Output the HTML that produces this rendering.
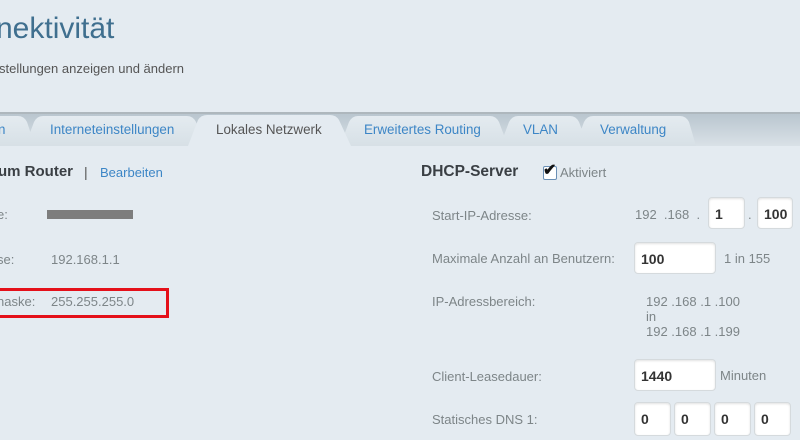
<!DOCTYPE html>
<html><head><meta charset="utf-8"><style>
body{margin:0;width:800px;height:440px;overflow:hidden;background:#e4ebf1;font-family:"Liberation Sans",sans-serif;position:relative}
.a{position:absolute;white-space:nowrap}
.lbl{color:#7d8588;font-size:13px}
.val{color:#7d8588;font-size:13px}
.inp{position:absolute;background:#fff;border:1px solid #d5dadd;border-radius:4px;box-shadow:inset 0 1px 2px rgba(0,0,0,.12);font-weight:bold;font-size:14px;color:#333;box-sizing:border-box;padding:8px 0 0 6px;height:32px}
</style></head><body>
<div class="a" style="left:-4px;top:12px;font-size:30px;color:#3f6f8f">nektivität</div>
<div class="a" style="left:-1px;top:61px;font-size:13px;color:#555">stellungen anzeigen und ändern</div>
<svg class="a" style="left:0;top:112px" width="800" height="34">
<defs><linearGradient id="g" x1="0" y1="0" x2="0" y2="1"><stop offset="0" stop-color="#b9c6cf"/><stop offset="1" stop-color="#d9e1e7"/></linearGradient>
<linearGradient id="t" x1="0" y1="0" x2="0" y2="1"><stop offset="0" stop-color="#e4ebf0"/><stop offset="1" stop-color="#d7e0e6"/></linearGradient></defs>
<rect x="0" y="0" width="800" height="2" fill="#aeb7bd"/>
<rect x="0" y="2" width="800" height="32" fill="url(#g)"/>
<path d="M-10 34 L-10 4 L18 4 Q24 4 27 10 L35 34Z" fill="url(#t)"/>
<path d="M25 34 L34 10 Q37 4 43 4 L187 4 Q193 4 196 10 L205 34Z" fill="url(#t)"/>
<path d="M340 34 L349 10 Q352 4 358 4 L490 4 Q496 4 499 10 L508 34Z" fill="url(#t)"/>
<path d="M500 34 L509 10 Q512 4 518 4 L570 4 Q576 4 579 10 L588 34Z" fill="url(#t)"/>
<path d="M575 34 L584 10 Q587 4 593 4 L680 4 Q686 4 689 10 L696 34Z" fill="url(#t)"/>
<path d="M188 34 L198 8 Q201 3 207 3 L330 3 Q336 3 339 8 L351 34Z" fill="#e4ebf1"/>
</svg>
<div class="a" style="left:-2px;top:122px;font-size:13.4px;color:#3d86c6">n</div>
<div class="a" style="left:50px;top:122px;font-size:13.4px;color:#3d86c6">Interneteinstellungen</div>
<div class="a" style="left:216px;top:122px;font-size:13.4px;color:#555">Lokales Netzwerk</div>
<div class="a" style="left:364px;top:122px;font-size:13.4px;color:#3d86c6">Erweitertes Routing</div>
<div class="a" style="left:523px;top:122px;font-size:13.4px;color:#3d86c6">VLAN</div>
<div class="a" style="left:600px;top:122px;font-size:13.4px;color:#3d86c6">Verwaltung</div>

<div class="a" style="left:-2px;top:163px;font-size:15px;font-weight:bold;color:#3a3f44">um Router</div>
<div class="a" style="left:84px;top:164px;font-size:14px;color:#555">|</div>
<div class="a" style="left:100px;top:165px;font-size:13px;color:#3d86c6">Bearbeiten</div>
<div class="a lbl" style="left:-3px;top:207px">e:</div>
<div class="a" style="left:47px;top:210px;width:86px;height:9px;background:#7d7d7d"></div>
<div class="a lbl" style="left:-3px;top:252px">se:</div>
<div class="a val" style="left:51px;top:252px">192.168.1.1</div>
<div class="a" style="left:-10px;top:288px;width:173px;height:24px;border:3px solid #e4101a"></div>
<div class="a lbl" style="left:-3px;top:294px">naske:</div>
<div class="a val" style="left:51px;top:294px">255.255.255.0</div>

<div class="a" style="left:421px;top:163px;font-size:15.5px;font-weight:bold;color:#3a3f44">DHCP-Server</div>
<div class="a" style="left:543px;top:166px;width:12px;height:12px;border:1px solid #6a8fb5;background:#fff;border-radius:2px"></div>
<div class="a" style="left:543px;top:160px;font-size:16px;font-weight:bold;color:#111">✔</div>
<div class="a lbl" style="left:560px;top:165px">Aktiviert</div>
<div class="a lbl" style="left:432px;top:208px">Start-IP-Adresse:</div>
<div class="a val" style="left:635px;top:207px">192 &nbsp;.168 &nbsp;.</div>
<div class="inp" style="left:708px;top:197px;width:37px">1</div>
<div class="a val" style="left:748px;top:207px">.</div>
<div class="inp" style="left:757px;top:197px;width:36px">100</div>
<div class="a lbl" style="left:432px;top:251px">Maximale Anzahl an Benutzern:</div>
<div class="inp" style="left:634px;top:242px;width:82px">100</div>
<div class="a val" style="left:724px;top:251px">1 in 155</div>
<div class="a lbl" style="left:432px;top:294px">IP-Adressbereich:</div>
<div class="a val" style="left:646px;top:294px;line-height:15px">192 .168 .1 .100<br>in<br>192 .168 .1 .199</div>
<div class="a lbl" style="left:432px;top:369px">Client-Leasedauer:</div>
<div class="inp" style="left:634px;top:359px;width:82px">1440</div>
<div class="a val" style="left:720px;top:368px">Minuten</div>
<div class="a lbl" style="left:432px;top:412px">Statisches DNS 1:</div>
<div class="inp" style="left:634px;top:402px;width:37px;height:34px">0</div>
<div class="inp" style="left:674px;top:402px;width:37px;height:34px">0</div>
<div class="inp" style="left:714px;top:402px;width:37px;height:34px">0</div>
<div class="inp" style="left:754px;top:402px;width:37px;height:34px">0</div>
</body></html>
